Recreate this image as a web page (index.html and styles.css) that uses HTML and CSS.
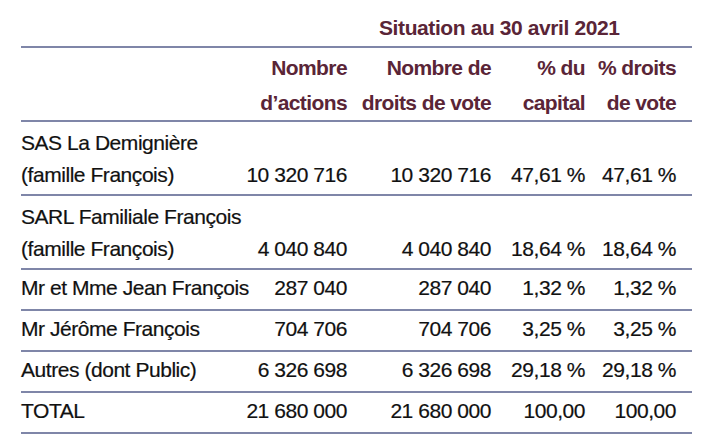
FILE: index.html
```html
<!DOCTYPE html>
<html lang="fr">
<head>
<meta charset="utf-8">
<title>Actionnariat</title>
<link rel="stylesheet" href="styles.css">
</head>
<body>
<table class="cap">
  <colgroup>
    <col class="c-label">
    <col class="c-n1">
    <col class="c-n2">
    <col class="c-p1">
    <col class="c-p2">
  </colgroup>
  <thead>
    <tr class="title-row">
      <th></th>
      <th></th>
      <th class="title" colspan="3">Situation au 30 avril 2021</th>
    </tr>
    <tr class="head-row">
      <th></th>
      <th>Nombre<br>d’actions</th>
      <th>Nombre de<br>droits de vote</th>
      <th>% du<br>capital</th>
      <th class="last">% droits<br>de vote</th>
    </tr>
  </thead>
  <tbody>
    <tr class="two">
      <td class="label">SAS La Demignière<br>(famille François)</td>
      <td>10 320 716</td>
      <td>10 320 716</td>
      <td>47,61 %</td>
      <td class="last">47,61 %</td>
    </tr>
    <tr class="two">
      <td class="label">SARL Familiale François<br>(famille François)</td>
      <td>4 040 840</td>
      <td>4 040 840</td>
      <td>18,64 %</td>
      <td class="last">18,64 %</td>
    </tr>
    <tr class="one">
      <td class="label">Mr et Mme Jean François</td>
      <td>287 040</td>
      <td>287 040</td>
      <td>1,32 %</td>
      <td class="last">1,32 %</td>
    </tr>
    <tr class="one">
      <td class="label">Mr Jérôme François</td>
      <td>704 706</td>
      <td>704 706</td>
      <td>3,25 %</td>
      <td class="last">3,25 %</td>
    </tr>
    <tr class="one">
      <td class="label">Autres (dont Public)</td>
      <td>6 326 698</td>
      <td>6 326 698</td>
      <td>29,18 %</td>
      <td class="last">29,18 %</td>
    </tr>
    <tr class="one">
      <td class="label">TOTAL</td>
      <td>21 680 000</td>
      <td>21 680 000</td>
      <td>100,00</td>
      <td class="last">100,00</td>
    </tr>
  </tbody>
</table>
</body>
</html>
```

FILE: styles.css
```css
html, body {
  margin: 0;
  padding: 0;
  background: #ffffff;
}

body {
  padding-top: 16px;
  font-family: "Liberation Sans", Arial, sans-serif;
  font-size: 21px;
  letter-spacing: -0.45px;
  color: #111111;
  -webkit-text-stroke: 0.2px #111111;
}

.cap {
  margin-left: 21px;
  width: 671px;
  table-layout: fixed;
  border-collapse: collapse;
  border-spacing: 0;
}

.c-label { width: 224px; }
.c-n1 { width: 102px; }
.c-n2 { width: 144px; }
.c-p1 { width: 94px; }
.c-p2 { width: 107px; }

.cap th,
.cap td {
  padding: 0;
  white-space: nowrap;
  text-align: right;
  vertical-align: bottom;
}

.cap .last {
  padding-right: 16px;
}

.cap tr {
  border-bottom: 2px solid #7f86a8;
}

.title-row th,
.head-row th {
  font-weight: 700;
  color: #5a2537;
  letter-spacing: -0.6px;
  -webkit-text-stroke: 0;
}

.title-row th {
  line-height: 24px;
  padding-bottom: 6px;
}

.cap th.title {
  text-align: left;
  padding-left: 32px;
  letter-spacing: -0.4px;
}

.head-row th {
  line-height: 35px;
  padding-top: 2px;
  padding-bottom: 0;
}

.cap td.label {
  text-align: left;
}

.two td {
  line-height: 32px;
  padding-top: 5px;
  padding-bottom: 3px;
}

.one td {
  line-height: 32px;
  padding-top: 2px;
  padding-bottom: 5px;
}
```
